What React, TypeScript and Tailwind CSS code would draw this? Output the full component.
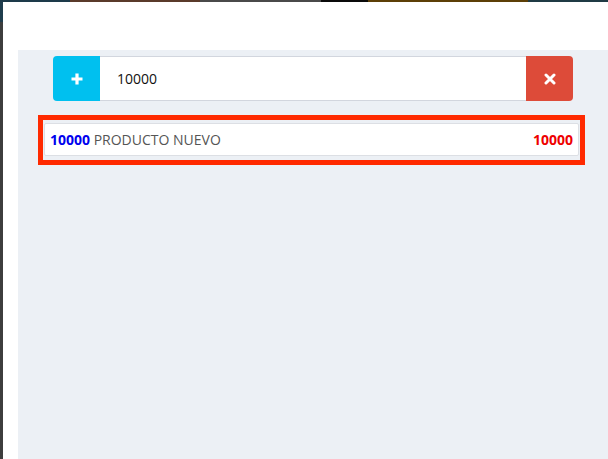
import React from "react";

export default function App() {
  return (
    <div className="w-[608px] h-[459px] flex flex-col overflow-hidden bg-white" style={{ fontFamily: '"Open Sans", "Noto Sans", sans-serif' }}>
      <div className="h-[2px] flex shrink-0">
        <div className="w-[70px] bg-[#1d3a4a]" />
        <div className="w-[130px] bg-[#5a3a2a]" />
        <div className="w-[121px] bg-[#4a4a4a]" />
        <div className="w-[47px] bg-[#0a0a0a]" />
        <div className="w-[160px] bg-[#5c3f06]" />
        <div className="flex-1 bg-[#1f3a44]" />
      </div>
      <div className="flex flex-1">
        <div className="w-[3px] flex flex-col shrink-0">
          <div className="h-[20px] bg-[#1f3d4d]" />
          <div className="flex-1 bg-[#3d3d3d]" />
        </div>
        <div className="flex-1 flex flex-col">
          <div className="h-[48px] bg-white shrink-0" />
          <div className="flex flex-1">
            <div className="w-[15px] bg-white shrink-0" />
            <div className="flex-1 bg-[#ecf0f5] pt-[6px]">
              <div className="flex h-[45px] ml-[35px] mr-[35px]">
                <div className="w-[47px] bg-[#00c0ef] rounded-l-[4px] flex items-center justify-center">
                  <svg width="14" height="14" viewBox="0 0 14 14">
                    <path d="M7 1.5v11M1.5 7h11" stroke="white" strokeWidth="3.2" strokeLinecap="butt" />
                  </svg>
                </div>
                <div className="flex-1 bg-white border-y border-[#d2d6de] flex items-center pl-[17px] text-[14px] text-[#111]">
                  10000
                </div>
                <div className="w-[47px] bg-[#dd4b39] rounded-r-[4px] flex items-center justify-center">
                  <svg width="12" height="12" viewBox="0 0 12 12">
                    <path d="M2 2l8 8M10 2l-8 8" stroke="white" strokeWidth="3" strokeLinecap="round" />
                  </svg>
                </div>
              </div>
              <div className="mt-[14px] ml-[20px] mr-[23px] h-[50px] border-[5px] border-[#ff2a00] px-[1px] pt-[3px]">
                <div className="h-[33px] bg-white border border-[#dcdfe4] rounded-[2px] flex items-center justify-between pl-[5px] pr-[5px] text-[14px]">
                  <div>
                    <span className="font-bold text-[#0000ee]">10000</span>
                    <span className="text-[#555]"> PRODUCTO NUEVO</span>
                  </div>
                  <span className="font-bold text-[#ee0000]">10000</span>
                </div>
              </div>
            </div>
          </div>
        </div>
      </div>
    </div>
  );
}
